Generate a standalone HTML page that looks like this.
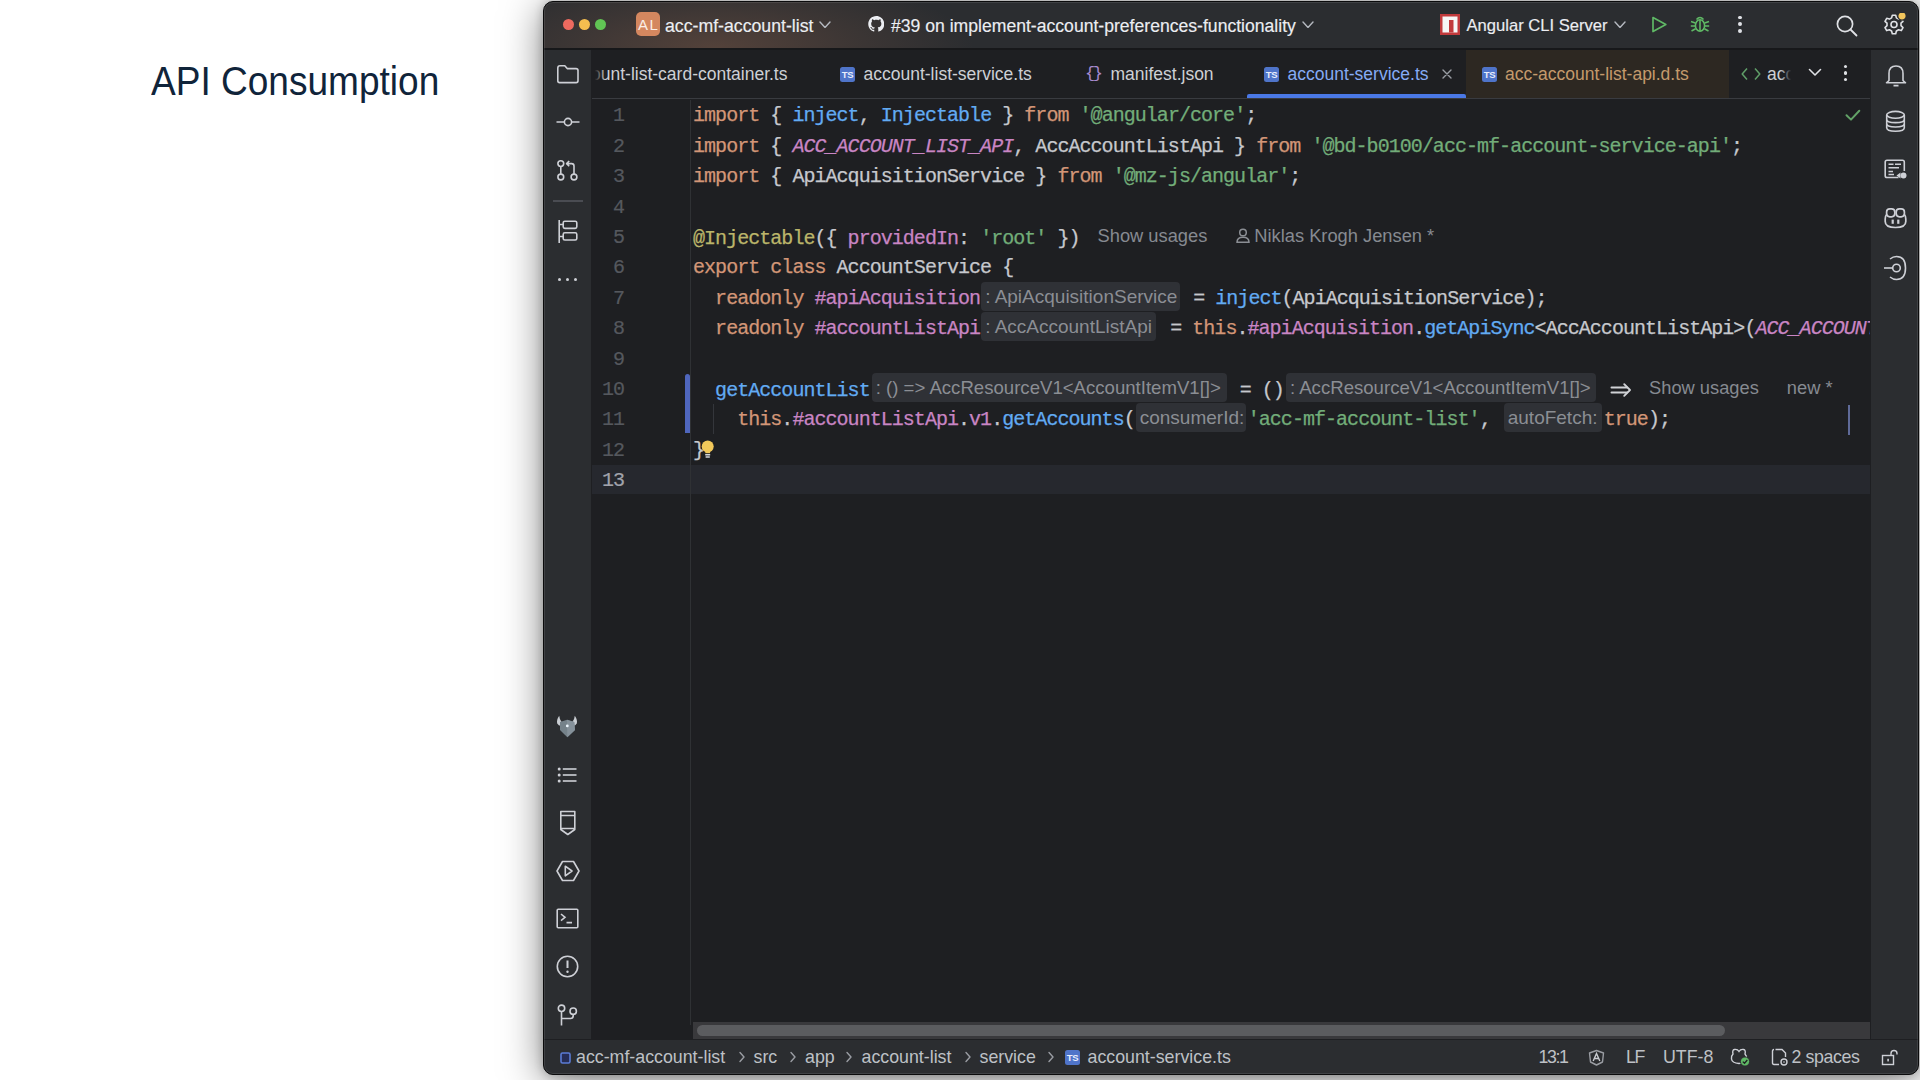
<!DOCTYPE html>
<html><head><meta charset="utf-8">
<style>
*{box-sizing:border-box;margin:0;padding:0}
html,body{width:1920px;height:1080px;overflow:hidden;background:#fff;font-family:"Liberation Sans",sans-serif}
.abs{position:absolute}
#title{position:absolute;left:151px;top:59px;font-size:40px;color:#10243a;white-space:nowrap;transform-origin:0 0;transform:scaleX(0.926)}
#win{position:absolute;left:543px;top:1px;width:1376px;height:1074px;border-radius:10px;background:#1e1f22;box-shadow:0 0 10px rgba(0,0,0,0.22),0 6px 40px rgba(0,0,0,0.5);border:1px solid #0b0b0c;overflow:hidden}
#tbar{position:absolute;left:0;top:0;width:1374px;height:47px;background:#2b2d30;border-bottom:1px solid #1e1f22}
#tglow{position:absolute;left:0;top:0;width:800px;height:47px;background:radial-gradient(ellipse 260px 75px at 170px 46px,rgba(150,100,75,0.38),rgba(150,100,75,0.16) 55%,rgba(150,100,75,0.0))}
#lstrip{position:absolute;left:0;top:47px;width:48px;height:990px;background:#2b2d30;border-right:1px solid #1e1f22}
#rstrip{position:absolute;left:1326px;top:47px;width:48px;height:990px;background:#2b2d30;border-left:1px solid #1e1f22}
#tabs{position:absolute;left:48px;top:47px;width:1278px;height:50px;background:#1e1f22;border-bottom:1px solid #393b40}
#status{position:absolute;left:0;top:1037px;width:1374px;height:36px;background:#2b2d30;border-top:1px solid #1e1f22}
.ui{font-family:"Liberation Sans",sans-serif;white-space:nowrap;position:absolute}
#code{position:absolute;left:48px;top:98px;width:1278px;height:925px;overflow:hidden;background:#1e1f22}
.ln{position:absolute;left:0;width:32px;text-align:right;line-height:30px;font-family:"Liberation Mono",monospace;font-size:20px;letter-spacing:-0.96px;color:#55585e;padding-top:1.2px;-webkit-text-stroke:0.2px}
.line{position:absolute;left:101px;height:30px;padding-top:1.0px;font-family:"Liberation Mono",monospace;font-size:20px;letter-spacing:-0.96px;white-space:pre;color:#c6c8cd;line-height:30px;-webkit-text-stroke:0.25px}
.k{color:#d39677}.s{color:#72ad79}.f{color:#62abf3}.c{color:#c985c4}.ci{color:#c985c4;font-style:italic}.d{color:#bbb56a}
.inl{-webkit-text-stroke:0;display:inline-block;vertical-align:top;position:relative;top:-1.8px;letter-spacing:0;height:29px;margin:0 2px;background:#2f3136;border-radius:4px;color:#8b8e94;font-family:"Liberation Sans",sans-serif;font-size:19px;line-height:29px;padding:0 0 0 4px;text-align:left;overflow:hidden}
.hint{-webkit-text-stroke:0;letter-spacing:0;position:relative;top:-1.5px;color:#868a91;font-family:"Liberation Sans",sans-serif;font-size:18.3px}
</style></head><body>
<div id="title">API Consumption</div>
<div id="win">
  <div id="tbar"><div id="tglow"></div>
<div class="abs" style="left:18.5px;top:17.1px;width:11px;height:11px;border-radius:50%;background:#ee6a5f"></div>
<div class="abs" style="left:34.5px;top:17.1px;width:11px;height:11px;border-radius:50%;background:#f5be4f"></div>
<div class="abs" style="left:50.5px;top:17.1px;width:11px;height:11px;border-radius:50%;background:#61c454"></div>
<div class="abs" style="left:92px;top:10px;width:24px;height:24px;border-radius:5px;background:#d4875f;color:#fbeee6;font-family:'Liberation Sans',sans-serif;font-size:15px;line-height:26px;text-align:center;letter-spacing:1.5px;text-indent:1.5px">AL</div>
<div class="ui" style="left:121px;top:9px;font-size:17.7px;line-height:26px;padding-top:1.5px;color:#eceef2;-webkit-text-stroke:0.15px #eceef2">acc-mf-account-list</div>
<svg class="abs" style="left:275.0px;top:18.95px" width="12" height="7.5" viewBox="0 0 12 7.5"><path d="M1 1 L6.0 6.5 L11 1" fill="none" stroke="#b4b8bf" stroke-width="1.4" stroke-linecap="round" stroke-linejoin="round"/></svg>
<svg class="abs" style="left:323.5px;top:14px" width="16.5" height="16" viewBox="0 0 16 16"><path fill="#eceef2" d="M8 0C3.58 0 0 3.58 0 8c0 3.54 2.29 6.53 5.47 7.59.4.07.55-.17.55-.38 0-.19-.01-.82-.01-1.49-2.01.37-2.53-.49-2.69-.94-.09-.23-.48-.94-.82-1.13-.28-.15-.68-.52-.01-.53.63-.01 1.08.58 1.23.82.72 1.21 1.87.87 2.33.66.07-.52.28-.87.51-1.07-1.78-.2-3.64-.89-3.64-3.95 0-.87.31-1.59.82-2.15-.08-.2-.36-1.02.08-2.12 0 0 .67-.21 2.2.82.64-.18 1.32-.27 2-.27.68 0 1.36.09 2 .27 1.53-1.04 2.2-.82 2.2-.82.44 1.1.16 1.92.08 2.12.51.56.82 1.27.82 2.15 0 3.07-1.87 3.75-3.65 3.95.29.25.54.73.54 1.48 0 1.07-.01 1.93-.01 2.2 0 .21.15.46.55.38A8.013 8.013 0 0016 8c0-4.42-3.58-8-8-8z"/></svg>
<div class="ui" style="left:347px;top:9px;font-size:17.6px;line-height:26px;padding-top:1.5px;color:#eceef2;-webkit-text-stroke:0.15px #eceef2">#39 on implement-account-preferences-functionality</div>
<svg class="abs" style="left:758.0px;top:18.75px" width="12" height="7.5" viewBox="0 0 12 7.5"><path d="M1 1 L6.0 6.5 L11 1" fill="none" stroke="#b4b8bf" stroke-width="1.4" stroke-linecap="round" stroke-linejoin="round"/></svg>
<svg class="abs" style="left:895.5px;top:12px" width="20" height="21" viewBox="0 0 20 21"><rect x="0" y="0" width="20" height="21" fill="#c13a3c"/><rect x="2.5" y="2.5" width="15" height="16" fill="#f6f6f6"/><rect x="9" y="6" width="4.5" height="12.5" fill="#c13a3c"/></svg>
<div class="ui" style="left:922.5px;top:9px;font-size:16.6px;line-height:26px;padding-top:1.5px;color:#eceef2;-webkit-text-stroke:0.15px #eceef2">Angular CLI Server</div>
<svg class="abs" style="left:1069.5px;top:18.75px" width="12" height="7.5" viewBox="0 0 12 7.5"><path d="M1 1 L6.0 6.5 L11 1" fill="none" stroke="#b4b8bf" stroke-width="1.4" stroke-linecap="round" stroke-linejoin="round"/></svg>
<svg class="abs" style="left:1107px;top:14px" width="17" height="17" viewBox="0 0 17 17"><path d="M2 1.5 L14.8 8.5 L2 15.5 Z" fill="none" stroke="#5fb865" stroke-width="1.7" stroke-linejoin="round"/></svg>
<svg class="abs" style="left:1146px;top:13px" width="20" height="18" viewBox="0 0 20 18"><ellipse cx="10" cy="10.5" rx="4.6" ry="5.8" fill="none" stroke="#5fb865" stroke-width="1.6"/><path d="M6.5 4.5 Q10 0.5 13.5 4.5" fill="none" stroke="#5fb865" stroke-width="1.6"/><path d="M1 6.5 L5.3 8 M19 6.5 L14.7 8 M0.8 11 L5.2 11 M19.2 11 L14.8 11 M1.5 16 L5.6 13.8 M18.5 16 L14.4 13.8 M10 5 L10 16" stroke="#5fb865" stroke-width="1.6" fill="none"/></svg>
<div class="abs" style="left:1194.3999999999999px;top:13.6px;width:3.8px;height:3.8px;border-radius:50%;background:#dfe1e5"></div>
<div class="abs" style="left:1194.3999999999999px;top:20.400000000000002px;width:3.8px;height:3.8px;border-radius:50%;background:#dfe1e5"></div>
<div class="abs" style="left:1194.3999999999999px;top:27.1px;width:3.8px;height:3.8px;border-radius:50%;background:#dfe1e5"></div>
<svg class="abs" style="left:1291.5px;top:12.5px" width="22" height="22" viewBox="0 0 22 22"><circle cx="9" cy="9" r="7.6" fill="none" stroke="#dfe1e5" stroke-width="1.7"/><path d="M14.5 14.5 L20.5 20.5" stroke="#dfe1e5" stroke-width="1.8" stroke-linecap="round"/></svg>
<svg class="abs" style="left:1339px;top:11px" width="23" height="23" viewBox="0 0 23 23"><path d="M9.3 2.2 L12.7 2.2 L13.4 4.9 L15.6 6.1 L18.3 5.3 L20 8.3 L18 10.2 L18 12.7 L20 14.6 L18.3 17.6 L15.6 16.8 L13.4 18 L12.7 20.7 L9.3 20.7 L8.6 18 L6.4 16.8 L3.7 17.6 L2 14.6 L4 12.7 L4 10.2 L2 8.3 L3.7 5.3 L6.4 6.1 L8.6 4.9 Z" fill="none" stroke="#dfe1e5" stroke-width="1.6" stroke-linejoin="round"/><circle cx="11" cy="11.5" r="3" fill="none" stroke="#dfe1e5" stroke-width="1.6"/><circle cx="19" cy="3" r="4.2" fill="#f2c55c" stroke="#2b2d30" stroke-width="1.2"/></svg>
</div>
  <div id="tabs">
<div class="ui" style="left:-1px;top:13px;font-size:17.5px;line-height:24px;color:#cdd0d5">o<span>unt-list-card-container.ts</span></div>
<div class="abs" style="left:0;top:0;width:14px;height:49px;background:linear-gradient(90deg,#1e1f22 20%,rgba(30,31,34,0))"></div>
<div class="abs" style="left:248px;top:18px;width:15px;height:14.5px;border-radius:2.5px;background:#4f74c9;color:#e8eefc;font-size:9.5px;font-weight:bold;line-height:15px;text-align:center;letter-spacing:-0.3px">TS</div>
<div class="ui" style="left:271.5px;top:13px;font-size:17.5px;line-height:24px;color:#cdd0d5;">account-list-service.ts</div>
<div class="ui" style="left:493px;top:16px;font-size:17px;line-height:18px;color:#a98ad0;font-family:'Liberation Mono',monospace;letter-spacing:-2.5px">{}</div>
<div class="ui" style="left:518.5px;top:13px;font-size:17.5px;line-height:24px;color:#cdd0d5;">manifest.json</div>
<div class="abs" style="left:672px;top:18px;width:15px;height:14.5px;border-radius:2.5px;background:#4f74c9;color:#e8eefc;font-size:9.5px;font-weight:bold;line-height:15px;text-align:center;letter-spacing:-0.3px">TS</div>
<div class="ui" style="left:695.5px;top:13px;font-size:17.5px;line-height:24px;color:#86abf5;">account-service.ts</div>
<svg class="abs" style="left:850px;top:20px" width="10" height="10" viewBox="0 0 10 10"><path d="M1 1 L9 9 M9 1 L1 9" stroke="#9a9da3" stroke-width="1.4" stroke-linecap="round"/></svg>
<div class="abs" style="left:655px;top:45px;width:219px;height:4px;border-radius:2px 2px 0 0;background:#4a78e6"></div>
<div class="abs" style="left:874px;top:0;width:263px;height:49px;background:#2d2822"></div>
<div class="abs" style="left:890px;top:18px;width:15px;height:14.5px;border-radius:2.5px;background:#4f74c9;color:#e8eefc;font-size:9.5px;font-weight:bold;line-height:15px;text-align:center;letter-spacing:-0.3px">TS</div>
<div class="ui" style="left:913px;top:13px;font-size:17.5px;line-height:24px;color:#c49a6c;">acc-account-list-api.d.ts</div>
<svg class="abs" style="left:1149px;top:18px" width="20" height="14" viewBox="0 0 20 14"><path d="M6 1.5 L1.2 7 L6 12.5 M14 1.5 L18.8 7 L14 12.5" fill="none" stroke="#5f9e68" stroke-width="1.5" stroke-linejoin="round"/></svg>
<div class="ui" style="left:1175px;top:13px;width:24px;overflow:hidden;font-size:17.5px;line-height:24px;color:#cdd0d5">acc</div>
<div class="abs" style="left:1188px;top:0;width:14px;height:49px;background:linear-gradient(90deg,rgba(30,31,34,0),#1e1f22 80%)"></div>
<svg class="abs" style="left:1215.5px;top:19px" width="14" height="9" viewBox="0 0 14 9"><path d="M1.5 1.5 L7 7 L12.5 1.5" fill="none" stroke="#dfe1e5" stroke-width="1.6" stroke-linecap="round" stroke-linejoin="round"/></svg>
<div class="abs" style="left:1252.0px;top:16.1px;width:3.2px;height:3.2px;border-radius:50%;background:#dfe1e5"></div>
<div class="abs" style="left:1252.0px;top:22.4px;width:3.2px;height:3.2px;border-radius:50%;background:#dfe1e5"></div>
<div class="abs" style="left:1252.0px;top:28.7px;width:3.2px;height:3.2px;border-radius:50%;background:#dfe1e5"></div>
</div>
  <div id="lstrip"></div>
  <div id="rstrip"></div>
  <svg class="abs" style="left:12px;top:62px" width="24" height="20" viewBox="0 0 24 20"><path d="M1.8 4 Q1.8 1.8 4 1.8 L8.8 1.8 L11.2 4.6 L20 4.6 Q22 4.6 22 6.6 L22 16.8 Q22 18.6 20.2 18.6 L3.6 18.6 Q1.8 18.6 1.8 16.8 Z" fill="none" stroke="#ced0d6" stroke-width="1.6" stroke-linejoin="round"/></svg>
<svg class="abs" style="left:11px;top:111px" width="26" height="18" viewBox="0 0 26 18"><circle cx="13" cy="9" r="3.6" fill="none" stroke="#ced0d6" stroke-width="1.6"/><path d="M1.5 9 L9.4 9 M16.6 9 L24.5 9" stroke="#ced0d6" stroke-width="1.6"/></svg>
<svg class="abs" style="left:12px;top:157px" width="23" height="23" viewBox="0 0 23 23"><circle cx="4.8" cy="4.6" r="2.9" fill="none" stroke="#ced0d6" stroke-width="1.6"/><circle cx="4.8" cy="18" r="2.9" fill="none" stroke="#ced0d6" stroke-width="1.6"/><circle cx="18" cy="18" r="2.9" fill="none" stroke="#ced0d6" stroke-width="1.6"/><path d="M4.8 7.5 L4.8 15.1 M18 15.1 L18 7 Q18 4.6 15.6 4.6 L11 4.6 M13.2 2 L10.6 4.6 L13.2 7.2" fill="none" stroke="#ced0d6" stroke-width="1.6" stroke-linejoin="round"/></svg>
<div class="abs" style="left:9px;top:198px;width:30px;height:1.5px;background:#4a4c52"></div>
<svg class="abs" style="left:13px;top:217px" width="22" height="25" viewBox="0 0 22 25"><path d="M2.2 1 L2.2 24 M2.2 5.5 L6 5.5 M2.2 17.5 L6 17.5" stroke="#ced0d6" stroke-width="1.6" fill="none"/><rect x="6.2" y="2.2" width="13.6" height="7.2" rx="1.6" fill="none" stroke="#ced0d6" stroke-width="1.6"/><rect x="6.2" y="13.8" width="13.6" height="7.2" rx="1.6" fill="none" stroke="#ced0d6" stroke-width="1.6"/></svg>
<div class="abs" style="left:13.8px;top:275.5px;width:3.6px;height:3.6px;border-radius:50%;background:#ced0d6"></div>
<div class="abs" style="left:21.6px;top:275.5px;width:3.6px;height:3.6px;border-radius:50%;background:#ced0d6"></div>
<div class="abs" style="left:29.6px;top:275.5px;width:3.6px;height:3.6px;border-radius:50%;background:#ced0d6"></div>
<svg class="abs" style="left:12px;top:713px" width="22" height="23" viewBox="0 0 22 23"><path d="M3.2 0.8 Q0.3 5 1.2 8.5 Q2.5 10.8 5 11 L5.6 7 Q3.6 5 3.2 0.8 Z M18.8 0.8 Q21.7 5 20.8 8.5 Q19.5 10.8 17 11 L16.4 7 Q18.4 5 18.8 0.8 Z" fill="#c9cdd2"/><path d="M4 7 L11 4.8 L18.2 7 L19 15 L11.3 22.3 L4 15 Z" fill="#75828a"/><path d="M11 4.8 L18.2 7 L19 15 L11.3 22.3 Z" fill="#85919a"/><circle cx="11.3" cy="10.9" r="1.4" fill="#eef8ff"/></svg>
<svg class="abs" style="left:13px;top:764.5px" width="20" height="17" viewBox="0 0 20 17"><circle cx="2.2" cy="2" r="1.5" fill="#ced0d6"/><path d="M5.8 2 L19.5 2" stroke="#ced0d6" stroke-width="1.6"/><circle cx="2.2" cy="8" r="1.5" fill="#ced0d6"/><path d="M5.8 8 L19.5 8" stroke="#ced0d6" stroke-width="1.6"/><circle cx="2.2" cy="14" r="1.5" fill="#ced0d6"/><path d="M5.8 14 L19.5 14" stroke="#ced0d6" stroke-width="1.6"/></svg>
<svg class="abs" style="left:14.5px;top:807.5px" width="18" height="27" viewBox="0 0 18 27"><path d="M1.8 1.5 L15.8 1.5 L15.8 19.5 L8.8 24.5 L1.8 19.5 Z M1.8 5.5 L15.8 5.5 M1.8 18.5 L15.8 18.5" fill="none" stroke="#ced0d6" stroke-width="1.6" stroke-linejoin="round"/></svg>
<svg class="abs" style="left:11.5px;top:857.5px" width="24" height="22" viewBox="0 0 24 22"><path d="M6.5 1.5 L17.5 1.5 L23 11 L17.5 20.5 L6.5 20.5 L1 11 Z" fill="none" stroke="#ced0d6" stroke-width="1.6" stroke-linejoin="round"/><path d="M9.3 6.2 L16 11 L9.3 15.8 Z" fill="none" stroke="#ced0d6" stroke-width="1.6" stroke-linejoin="round"/></svg>
<svg class="abs" style="left:12px;top:906px" width="23" height="21" viewBox="0 0 23 21"><rect x="1.2" y="1.2" width="20.6" height="18.6" rx="1" fill="none" stroke="#ced0d6" stroke-width="1.6"/><path d="M5 6 L9 9.3 L5 12.6 M10.5 14.6 L16 14.6" fill="none" stroke="#ced0d6" stroke-width="1.6"/></svg>
<svg class="abs" style="left:12px;top:952.5px" width="23" height="23" viewBox="0 0 23 23"><circle cx="11.5" cy="11.5" r="10.2" fill="none" stroke="#ced0d6" stroke-width="1.6"/><path d="M11.5 5.5 L11.5 13" stroke="#ced0d6" stroke-width="2"/><circle cx="11.5" cy="16.8" r="1.2" fill="#ced0d6"/></svg>
<svg class="abs" style="left:13px;top:1002px" width="21" height="22" viewBox="0 0 21 22"><circle cx="4.5" cy="4.3" r="3.2" fill="none" stroke="#ced0d6" stroke-width="1.6"/><circle cx="16.2" cy="7.2" r="3.2" fill="none" stroke="#ced0d6" stroke-width="1.6"/><path d="M4.5 7.5 L4.5 21.5 M4.5 14.5 L13.5 14.5 Q16.2 14.5 16.2 11.8 L16.2 10.4" fill="none" stroke="#ced0d6" stroke-width="1.6"/></svg>
<svg class="abs" style="left:1340.5px;top:61.5px" width="22" height="23" viewBox="0 0 22 23"><path d="M4 16.5 L4 9.5 Q4 2 11 2 Q18 2 18 9.5 L18 16.5 L20.5 18.8 L1.5 18.8 Z" fill="none" stroke="#ced0d6" stroke-width="1.6" stroke-linejoin="round"/><path d="M8.5 21.6 L13.5 21.6" stroke="#ced0d6" stroke-width="1.6"/></svg>
<svg class="abs" style="left:1341px;top:108px" width="21" height="23" viewBox="0 0 21 23"><ellipse cx="10.5" cy="4.8" rx="8.8" ry="3.4" fill="none" stroke="#ced0d6" stroke-width="1.6"/><path d="M1.7 4.8 L1.7 17.8 Q1.7 21.2 10.5 21.2 Q19.3 21.2 19.3 17.8 L19.3 4.8 M1.7 9.2 Q1.7 12.6 10.5 12.6 Q19.3 12.6 19.3 9.2 M1.7 13.6 Q1.7 17 10.5 17 Q19.3 17 19.3 13.6" fill="none" stroke="#ced0d6" stroke-width="1.6"/></svg>
<svg class="abs" style="left:1340px;top:157px" width="23" height="21" viewBox="0 0 23 21"><path d="M14.5 18.5 L3 18.5 Q1.2 18.5 1.2 16.7 L1.2 3 Q1.2 1.2 3 1.2 L18.5 1.2 Q20.3 1.2 20.3 3 L20.3 12" fill="none" stroke="#ced0d6" stroke-width="1.6"/><path d="M4.5 5.2 L9.5 5.2 M11 5.2 L17 5.2 M4.5 8.8 L15 8.8 M4.5 12.4 L9 12.4 M4.5 15.6 L10 15.6" stroke="#ced0d6" stroke-width="1.5"/><path d="M16.5 13.5 L12.5 16.5 L16.5 19.5 Z" fill="#ced0d6"/><circle cx="19.5" cy="16.5" r="3" fill="#ced0d6"/></svg>
<svg class="abs" style="left:1339.5px;top:205px" width="23" height="22" viewBox="0 0 23 22"><rect x="2.6" y="1.8" width="8.2" height="8" rx="3.2" fill="none" stroke="#ced0d6" stroke-width="1.7"/><rect x="12.2" y="1.8" width="8.2" height="8" rx="3.2" fill="none" stroke="#ced0d6" stroke-width="1.7"/><path d="M2.6 7.5 Q1.2 9 1.2 12 L1.2 14.5 Q1.2 20.5 11.5 20.5 Q21.8 20.5 21.8 14.5 L21.8 12 Q21.8 9 20.4 7.5" fill="none" stroke="#ced0d6" stroke-width="1.7"/><rect x="7.6" y="12.6" width="2.2" height="4.2" fill="#ced0d6"/><rect x="13.2" y="12.6" width="2.2" height="4.2" fill="#ced0d6"/></svg>
<svg class="abs" style="left:1339px;top:253px" width="24" height="26" viewBox="0 0 24 26"><path d="M7 4 Q10 1.5 13.5 1.5 Q22.5 1.5 22.5 13 Q22.5 24.5 13.5 24.5 Q10 24.5 7 22" fill="none" stroke="#ced0d6" stroke-width="1.6"/><circle cx="13.5" cy="13" r="3.8" fill="none" stroke="#ced0d6" stroke-width="1.6"/><path d="M1 13 L9.7 13" stroke="#ced0d6" stroke-width="1.6"/></svg>
<div id="code">
<div class="abs" style="left:0;top:364.7px;width:1278px;height:29px;background:#26282e"></div>
<div class="abs" style="left:98px;top:0;width:1px;height:925px;background:#2f3134"></div>
<div class="abs" style="left:92.8px;top:274.3px;width:5.2px;height:58.5px;border-radius:2.5px 2.5px 0 0;background:#4f66bd"></div>
<div class="abs" style="left:120.5px;top:304px;width:1px;height:30px;background:#34363b"></div>
<div class="abs" style="left:1256px;top:305px;width:2px;height:30px;background:#5f6a98"></div>
<svg class="abs" style="left:1252px;top:8px" width="18" height="14" viewBox="0 0 18 14"><path d="M2.5 7.3 L7 11.6 L15.3 2.8" fill="none" stroke="#62a267" stroke-width="2" stroke-linecap="round" stroke-linejoin="round"/></svg>
<div class="ln" style="top:0.2px">1</div>
<div class="ln" style="top:30.6px">2</div>
<div class="ln" style="top:61.0px">3</div>
<div class="ln" style="top:91.4px">4</div>
<div class="ln" style="top:121.8px">5</div>
<div class="ln" style="top:152.2px">6</div>
<div class="ln" style="top:182.6px">7</div>
<div class="ln" style="top:213.0px">8</div>
<div class="ln" style="top:243.4px">9</div>
<div class="ln" style="top:273.8px">10</div>
<div class="ln" style="top:304.2px">11</div>
<div class="ln" style="top:334.6px">12</div>
<div class="ln" style="top:365.0px;color:#a1a3ab">13</div>
<div class="line" style="top:0.2px"><span class="k">import</span> { <span class="f">inject</span>, <span class="f">Injectable</span> } <span class="k">from</span> <span class="s">'@angular/core'</span>;</div>
<div class="line" style="top:30.6px"><span class="k">import</span> { <span class="ci">ACC_ACCOUNT_LIST_API</span>, AccAccountListApi } <span class="k">from</span> <span class="s">'@bd-b0100/acc-mf-account-service-api'</span>;</div>
<div class="line" style="top:61.0px"><span class="k">import</span> { ApiAcquisitionService } <span class="k">from</span> <span class="s">'@mz-js/angular'</span>;</div>
<div class="line" style="top:121.8px"><span class="d">@Injectable</span>({ <span class="c">providedIn</span>: <span class="s">'root'</span> })<span class="hint" style="margin-left:18px">Show usages</span><span class="hint" style="margin-left:29px"><svg width="14" height="15" viewBox="0 0 14 15" style="vertical-align:-1px;margin-right:4px"><circle cx="7" cy="4.5" r="3.3" fill="none" stroke="#8b8e94" stroke-width="1.5"/><path d="M1 14.2 Q1 9.2 7 9.2 Q13 9.2 13 14.2 Z" fill="none" stroke="#8b8e94" stroke-width="1.5"/></svg>Niklas Krogh Jensen *</span></div>
<div class="line" style="top:152.2px"><span class="k">export class</span> AccountService {</div>
<div class="line" style="top:182.6px">  <span class="k">readonly</span> <span class="c">#apiAcquisition</span><span class="inl" style="width:199px;margin:0 2px 0 1px">: ApiAcquisitionService</span> = <span class="f">inject</span>(ApiAcquisitionService);</div>
<div class="line" style="top:213.0px">  <span class="k">readonly</span> <span class="c">#accountListApi</span><span class="inl" style="width:175px;margin:0 3px 0 1px">: AccAccountListApi</span> = <span class="k">this</span>.<span class="c">#apiAcquisition</span>.<span class="f">getApiSync</span>&lt;AccAccountListApi&gt;(<span class="ci">ACC_ACCOUNT_LIST_API</span>);</div>
<div class="line" style="top:273.8px">  <span class="f">getAccountList</span><span class="inl" style="width:355px;margin:0 2px 0 2px;font-size:18.6px">: () =&gt; AccResourceV1&lt;AccountItemV1[]&gt;</span> = ()<span class="inl" style="width:310px;margin:0 2px 0 2px;font-size:18.6px">: AccResourceV1&lt;AccountItemV1[]&gt;</span> <span class="arrow" style="display:inline-block;width:22.08px;height:20px;vertical-align:top;position:relative"><svg style="position:absolute;left:0;top:4.8px" width="23" height="20" viewBox="0 0 23 20"><path d="M2.5 7.6 L18 7.6 M2.5 12.4 L18 12.4" stroke="#d0d2d6" stroke-width="2" stroke-linecap="round"/><path d="M15.2 4.2 L21 10 L15.2 15.8" fill="none" stroke="#d0d2d6" stroke-width="1.9" stroke-linecap="round" stroke-linejoin="round"/></svg></span><span class="hint" style="margin-left:18px">Show usages</span><span class="hint" style="margin-left:28px">new *</span></div>
<div class="line" style="top:304.2px">    <span class="k">this</span>.<span class="c">#accountListApi</span>.<span class="c">v1</span>.<span class="f">getAccounts</span>(<span class="inl" style="width:110px;margin:0 2px 0 1px">consumerId:</span><span class="s">'acc-mf-account-list'</span>, <span class="inl" style="width:98px;margin:0 2px 0 2px">autoFetch:</span><span class="k">true</span>);</div>
<div class="line" style="top:334.6px">}</div>
<svg class="abs" style="left:108px;top:338px" width="16" height="22" viewBox="0 0 16 22"><circle cx="7.7" cy="8.6" r="6" fill="#f2c85a"/><path d="M5.3 13 L10.1 13 L10.1 15.2 L5.3 15.2 Z" fill="#f2c85a"/><path d="M5.2 16.8 L10.2 16.8 M5.6 19 L9.8 19" stroke="#d5d7db" stroke-width="1.4"/></svg>
</div>
  <div id="status"></div>
<div class="abs" style="left:0;top:46px;width:1374px;height:1.6px;background:#17181a"></div>
<div class="abs" style="left:149px;top:1020px;width:1177px;height:17px;background:#39393c"></div>
<div class="abs" style="left:153px;top:1023px;width:1028px;height:11px;border-radius:6px;background:#5b5c5f"></div>
<svg class="abs" style="left:16px;top:1050px" width="11" height="12" viewBox="0 0 11 12"><rect x="1" y="1" width="9" height="10" rx="1.5" fill="#262d55" stroke="#5b7bd5" stroke-width="1.6"/></svg>
<div class="ui" style="left:32px;top:1043px;font-size:17.8px;line-height:24px;color:#bec1c6">acc-mf-account-list</div>
<svg class="abs" style="left:193.5px;top:1049px" width="8" height="12" viewBox="0 0 8 12"><path d="M2 1.5 L6 6 L2 10.5" fill="none" stroke="#9a9da3" stroke-width="1.4" stroke-linecap="round" stroke-linejoin="round"/></svg>
<div class="ui" style="left:209.5px;top:1043px;font-size:17.8px;line-height:24px;color:#bec1c6">src</div>
<svg class="abs" style="left:244.5px;top:1049px" width="8" height="12" viewBox="0 0 8 12"><path d="M2 1.5 L6 6 L2 10.5" fill="none" stroke="#9a9da3" stroke-width="1.4" stroke-linecap="round" stroke-linejoin="round"/></svg>
<div class="ui" style="left:261px;top:1043px;font-size:17.8px;line-height:24px;color:#bec1c6">app</div>
<svg class="abs" style="left:301.0px;top:1049px" width="8" height="12" viewBox="0 0 8 12"><path d="M2 1.5 L6 6 L2 10.5" fill="none" stroke="#9a9da3" stroke-width="1.4" stroke-linecap="round" stroke-linejoin="round"/></svg>
<div class="ui" style="left:317.5px;top:1043px;font-size:17.8px;line-height:24px;color:#bec1c6">account-list</div>
<svg class="abs" style="left:419.5px;top:1049px" width="8" height="12" viewBox="0 0 8 12"><path d="M2 1.5 L6 6 L2 10.5" fill="none" stroke="#9a9da3" stroke-width="1.4" stroke-linecap="round" stroke-linejoin="round"/></svg>
<div class="ui" style="left:435.5px;top:1043px;font-size:17.8px;line-height:24px;color:#bec1c6">service</div>
<svg class="abs" style="left:502.5px;top:1049px" width="8" height="12" viewBox="0 0 8 12"><path d="M2 1.5 L6 6 L2 10.5" fill="none" stroke="#9a9da3" stroke-width="1.4" stroke-linecap="round" stroke-linejoin="round"/></svg>
<div class="abs" style="left:521px;top:1048px;width:15px;height:14.5px;border-radius:2.5px;background:#4f74c9;color:#e8eefc;font-size:9.5px;font-weight:bold;line-height:15px;text-align:center;letter-spacing:-0.3px">TS</div>
<div class="ui" style="left:543.5px;top:1043px;font-size:17.8px;line-height:24px;color:#bec1c6">account-service.ts</div>
<div class="ui" style="left:994.5px;top:1043px;font-size:17.8px;line-height:24px;color:#bec1c6;letter-spacing:-1.4px">13:1</div>
<svg class="abs" style="left:1043.5px;top:1047px" width="17" height="17" viewBox="0 0 17 17"><path d="M8.5 1.5 L15.5 4 L14.5 13 L8.5 16 L2.5 13 L1.5 4 Z" fill="none" stroke="#9a9da3" stroke-width="1.4" stroke-linejoin="round"/><path d="M5.2 12 L8.5 4.5 L11.8 12 M6.5 9.5 L10.5 9.5" fill="none" stroke="#c9ccd1" stroke-width="1.4"/></svg>
<div class="ui" style="left:1082px;top:1043px;font-size:17.8px;line-height:24px;color:#bec1c6;letter-spacing:-1.5px">LF</div>
<div class="ui" style="left:1119px;top:1043px;font-size:17.8px;line-height:24px;color:#bec1c6">UTF-8</div>
<svg class="abs" style="left:1185.5px;top:1046px" width="21" height="19" viewBox="0 0 21 19"><path d="M3 6 Q2 2 4.5 1.5 Q7.5 1 9 3.5 Q10.5 1 13.5 1.5 Q16 2 15 6 Q17 8 16.5 11 Q16 15 9 15.5 Q2 15 1.5 11 Q1 8 3 6 Z" fill="none" stroke="#ced0d6" stroke-width="1.4"/><circle cx="15" cy="13.5" r="4.6" fill="#5fb865" stroke="#2b2d30" stroke-width="1"/><path d="M12.8 13.6 L14.5 15.2 L17.3 12" fill="none" stroke="#1e1f22" stroke-width="1.3"/></svg>
<svg class="abs" style="left:1226.5px;top:1046px" width="19" height="19" viewBox="0 0 19 19"><path d="M4.5 1.5 L11 1.5 L14.5 5 L14.5 9 M8 16.5 L3 16.5 Q1.5 16.5 1.5 15 L1.5 3 Q1.5 1.5 3 1.5" fill="none" stroke="#ced0d6" stroke-width="1.4"/><circle cx="13" cy="14" r="3" fill="none" stroke="#ced0d6" stroke-width="1.4"/><circle cx="13" cy="14" r="0.8" fill="#ced0d6"/></svg>
<div class="ui" style="left:1247.5px;top:1043px;font-size:17.8px;line-height:24px;color:#bec1c6;letter-spacing:-0.4px">2 spaces</div>
<svg class="abs" style="left:1336.5px;top:1047px" width="19" height="17" viewBox="0 0 19 17"><rect x="1.5" y="6.5" width="11" height="9" fill="none" stroke="#ced0d6" stroke-width="1.4"/><path d="M10 6.5 L10 4.5 Q10 1.5 13 1.5 Q16 1.5 16 4.5 L16 5.5" fill="none" stroke="#ced0d6" stroke-width="1.4"/><rect x="6.3" y="9.8" width="1.6" height="2.6" fill="#ced0d6"/></svg>
<div class="abs" style="left:0;top:0;width:1374px;height:1072px;border-radius:9px;border:1px solid rgba(255,255,255,0.1);pointer-events:none"></div>
</div>
</body></html>
